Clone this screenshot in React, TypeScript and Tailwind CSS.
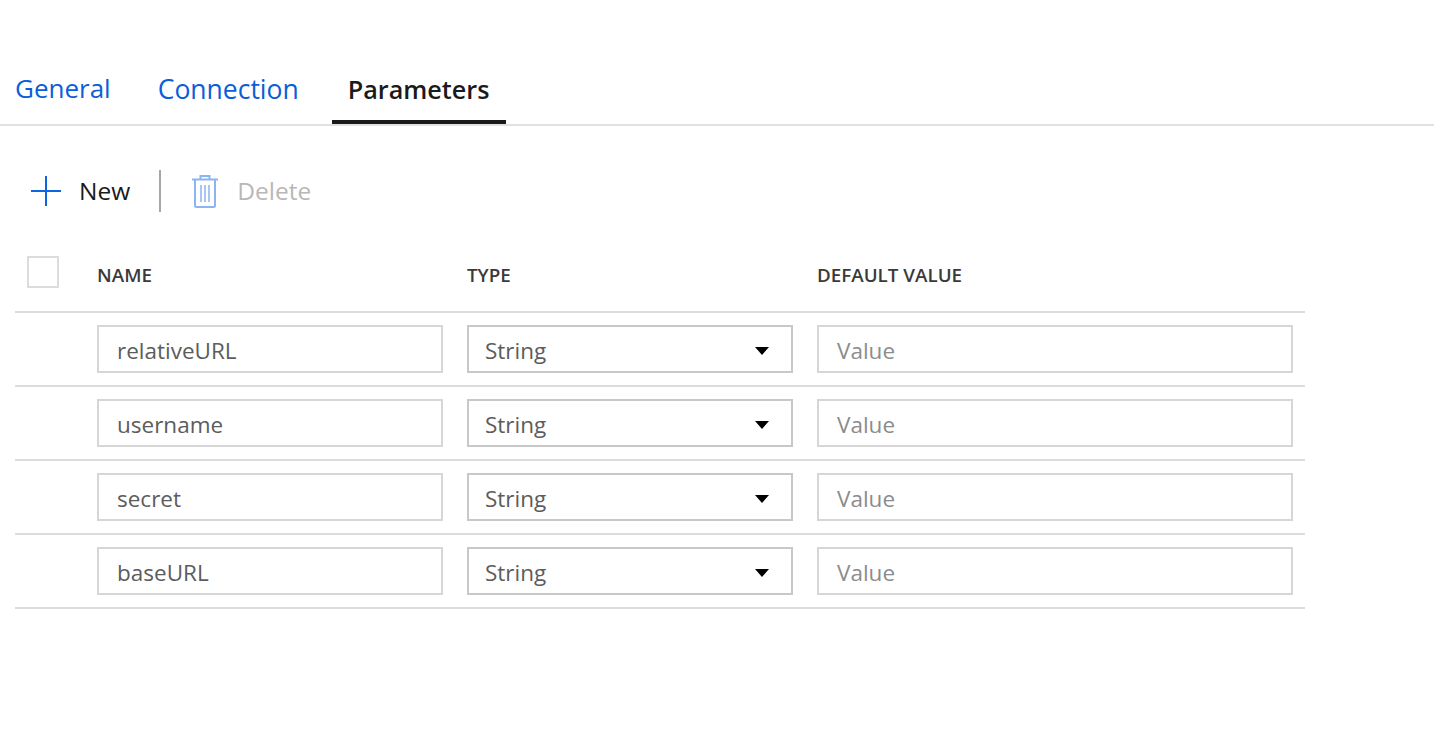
import React from 'react';

const font = { fontFamily: '"Open Sans", "Noto Sans", sans-serif' };

const rows = ['relativeURL', 'username', 'secret', 'baseURL'];

const TrashIcon = () => (
  <svg width="28" height="34" viewBox="0 0 28 34" fill="none" stroke="#8ab4f3" strokeWidth="2">
    <path d="M1 5.5h26" />
    <path d="M9.5 5V2h9v3" />
    <path d="M4 6v25.5a1.5 1.5 0 0 0 1.5 1.5h17a1.5 1.5 0 0 0 1.5-1.5V6" />
    <path d="M10 11v17M14 11v17M18 11v17" strokeWidth="1.5" />
  </svg>
);

const App: React.FC = () => {
  return (
    <div className="h-[733px] w-[1434px] overflow-hidden bg-white" style={font}>
      {/* Tabs */}
      <div className="flex h-[126px] items-end border-b-2 border-[#e1e1e1] pl-[15px]">
        <div className="mb-[20px] flex h-[32px] items-center text-[26px] leading-none text-[#0b5ed7]">General</div>
        <div className="mb-[19px] ml-[47px] flex h-[32px] items-center text-[26.5px] leading-none text-[#0b5ed7]">Connection</div>
        <div className="ml-[33px] flex h-[56px] items-center border-b-4 border-[#1a1a1a] pb-[9px] pl-[16px] pr-[17px] text-[25.2px] font-semibold leading-none text-[#1a1a1a]">
          Parameters
        </div>
      </div>

      {/* Toolbar */}
      <div className="flex h-[130px] items-center pl-[31px]">
        <svg width="30" height="30" viewBox="0 0 30 30" stroke="#0b66e0" strokeWidth="2">
          <path d="M0 15h30M15 0v30" />
        </svg>
        <span className="ml-[18px] text-[24.5px] text-[#1a1a1a]">New</span>
        <div className="ml-[29px] h-[42px] w-[2px] bg-[#a6a6a6]" />
        <div className="ml-[30px]"><TrashIcon /></div>
        <span className="ml-[18px] text-[24.5px] text-[#b8b8b8]">Delete</span>
      </div>

      {/* Table */}
      <div className="ml-[15px] w-[1290px]">
        <div className="grid h-[57px] grid-cols-[82px_370px_350px_488px] items-start border-b-2 border-[#dcdcdc] text-[18.8px] font-semibold text-[#3a3a3a]">
          <div className="pl-[12px]">
            <div className="h-[32px] w-[32px] border-2 border-[#dcdcdc]" />
          </div>
          <div className="flex h-[38px] items-center">NAME</div>
          <div className="flex h-[38px] items-center">TYPE</div>
          <div className="flex h-[38px] items-center">DEFAULT VALUE</div>
        </div>
        {rows.map((name) => (
          <div key={name} className="grid h-[74px] grid-cols-[82px_370px_350px_488px] items-center border-b-2 border-[#dcdcdc] text-[22.5px]">
            <div />
            <div className="flex h-[48px] w-[346px] items-center border-2 border-[#d6d6d6] pl-[18px] pt-[3px] text-[#5c5c5c]">{name}</div>
            <div className="flex h-[48px] w-[326px] items-center justify-between border-2 border-[#c8c8c8] pl-[16px] pr-[22px] pt-[3px] text-[#5c5c5c]">
              String
              <svg width="14" height="8" viewBox="0 0 14 8" fill="#000">
                <path d="M0 0h14L7 8z" />
              </svg>
            </div>
            <div className="flex h-[48px] w-[476px] items-center border-2 border-[#d6d6d6] pl-[18px] pt-[3px] text-[#8c8c8c]">Value</div>
          </div>
        ))}
      </div>
    </div>
  );
};

export default App;
